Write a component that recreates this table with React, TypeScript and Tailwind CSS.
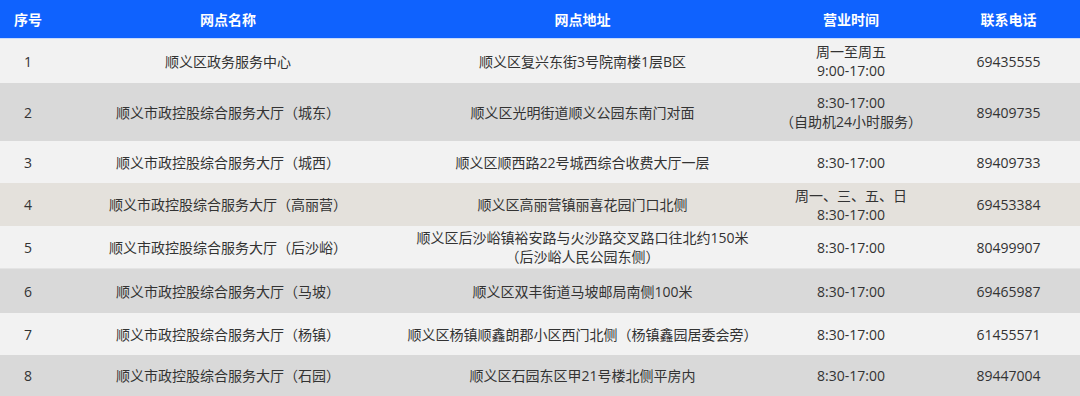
import React from "react";

const headers = ["序号", "网点名称", "网点地址", "营业时间", "联系电话"];

const rows = [
  {
    no: "1",
    name: "顺义区政务服务中心",
    address: ["顺义区复兴东街3号院南楼1层B区"],
    hours: ["周一至周五", "9:00-17:00"],
    phone: "69435555",
    rowClass: "h-[44px] bg-[#f2f2f2]",
  },
  {
    no: "2",
    name: "顺义市政控股综合服务大厅（城东）",
    address: ["顺义区光明街道顺义公园东南门对面"],
    hours: ["8:30-17:00", "（自助机24小时服务）"],
    phone: "89409735",
    rowClass: "h-[58px] bg-[#d9d9d9]",
  },
  {
    no: "3",
    name: "顺义市政控股综合服务大厅（城西）",
    address: ["顺义区顺西路22号城西综合收费大厅一层"],
    hours: ["8:30-17:00"],
    phone: "89409733",
    rowClass: "h-[42px] bg-[#f2f2f2]",
  },
  {
    no: "4",
    name: "顺义市政控股综合服务大厅（高丽营）",
    address: ["顺义区高丽营镇丽喜花园门口北侧"],
    hours: ["周一、三、五、日", "8:30-17:00"],
    phone: "69453384",
    rowClass: "h-[43px] bg-[#e4e1dc]",
  },
  {
    no: "5",
    name: "顺义市政控股综合服务大厅（后沙峪）",
    address: ["顺义区后沙峪镇裕安路与火沙路交叉路口往北约150米", "（后沙峪人民公园东侧）"],
    hours: ["8:30-17:00"],
    phone: "80499907",
    rowClass: "h-[43px] bg-[#f2f2f2] border-b border-[#e4e4e4]",
  },
  {
    no: "6",
    name: "顺义市政控股综合服务大厅（马坡）",
    address: ["顺义区双丰街道马坡邮局南侧100米"],
    hours: ["8:30-17:00"],
    phone: "69465987",
    rowClass: "h-[44px] bg-[#d9d9d9]",
  },
  {
    no: "7",
    name: "顺义市政控股综合服务大厅（杨镇）",
    address: ["顺义区杨镇顺鑫朗郡小区西门北侧（杨镇鑫园居委会旁）"],
    hours: ["8:30-17:00"],
    phone: "61455571",
    rowClass: "h-[42px] bg-[#f2f2f2]",
  },
  {
    no: "8",
    name: "顺义市政控股综合服务大厅（石园）",
    address: ["顺义区石园东区甲21号楼北侧平房内"],
    hours: ["8:30-17:00"],
    phone: "89447004",
    rowClass: "h-[41px] bg-[#d9d9d9]",
  },
];

const cols = "grid grid-cols-[56px_344px_365px_172px_143px]";

const Lines: React.FC<{ lines: string[] }> = ({ lines }) => (
  <div className="flex flex-col items-center text-center leading-[19px]">
    {lines.map((l, i) => (
      <span key={i} className="whitespace-nowrap">
        {l}
      </span>
    ))}
  </div>
);

export default function App() {
  return (
    <div
      className="w-[1080px] h-[396px] overflow-hidden bg-white text-[14px] text-[#333333]"
      style={{ fontFamily: '"Open Sans", "Noto Sans CJK SC", sans-serif' }}
    >
      <div className={`${cols} h-[39px] bg-[#0f62fe] border-b border-[#c8dafc] text-white font-bold`}>
        {headers.map((h) => (
          <div key={h} className="flex items-center justify-center">
            {h}
          </div>
        ))}
      </div>

      {rows.map((r) => (
        <div key={r.no} className={`${cols} ${r.rowClass}`}>
          <div className="flex items-center justify-center">{r.no}</div>
          <div className="flex items-center justify-center whitespace-nowrap">{r.name}</div>
          <div className="flex items-center justify-center">
            <Lines lines={r.address} />
          </div>
          <div className="flex items-center justify-center">
            <Lines lines={r.hours} />
          </div>
          <div className="flex items-center justify-center">{r.phone}</div>
        </div>
      ))}
    </div>
  );
}
